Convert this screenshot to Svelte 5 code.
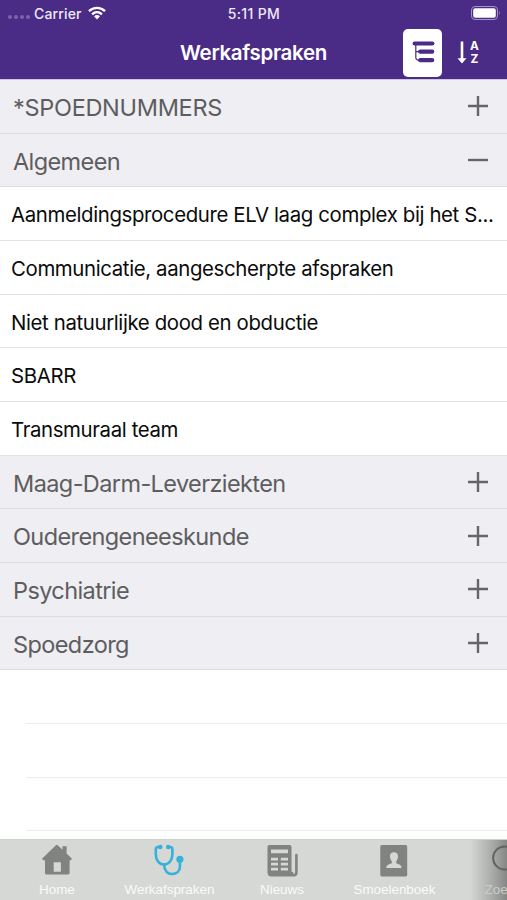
<script lang="ts">
	type Section = { title: string; items: string[] };

	const sections: Section[] = [
		{ title: '*SPOEDNUMMERS', items: [] },
		{
			title: 'Algemeen',
			items: [
				'Aanmeldingsprocedure ELV laag complex bij het S...',
				'Communicatie, aangescherpte afspraken',
				'Niet natuurlijke dood en obductie',
				'SBARR',
				'Transmuraal team'
			]
		},
		{ title: 'Maag-Darm-Leverziekten', items: [] },
		{ title: 'Ouderengeneeskunde', items: [] },
		{ title: 'Psychiatrie', items: [] },
		{ title: 'Spoedzorg', items: [] }
	];

	const tabs = [
		{ id: 'home', label: 'Home' },
		{ id: 'agreements', label: 'Werkafspraken' },
		{ id: 'news', label: 'Nieuws' },
		{ id: 'faces', label: 'Smoelenboek' },
		{ id: 'search', label: 'Zoeken' }
	];

	let open = $state('Algemeen');
	let active = $state('agreements');

	function toggle(title: string) {
		open = open === title ? '' : title;
	}
</script>

<div class="screen">
	<header>
		<div class="status">
			<div class="carrier">
				<span class="dots"><i></i><i></i><i></i><i></i></span>
				<span>Carrier</span>
				<svg class="wifi" viewBox="0 0 20 16" width="20" height="16">
					<path d="M2 6.2C6.5 1.7 13.5 1.7 18 6.2" />
					<path d="M5.1 9.3C8 6.5 12 6.5 14.9 9.3" />
					<path class="solid" d="M7 11.3Q10 8.7 13 11.3L10 14.4Z" />
				</svg>
			</div>
			<span class="time">5:11 PM</span>
			<svg class="battery" viewBox="0 0 32 16" width="32" height="16">
				<rect x="1.5" y="1.5" width="26" height="13" rx="3.5" fill="none" stroke="#a493c6" />
				<rect x="3.2" y="3.2" width="22.6" height="9.6" rx="2" fill="#fff" />
				<path d="M29.3 6Q31 8 29.3 10Z" fill="#a493c6" />
			</svg>
		</div>

		<div class="navbar">
			<h1>Werkafspraken</h1>
			<div class="actions">
				<button class="tree" aria-label="Categorieën">
					<svg viewBox="0 0 24 24" width="24" height="24">
						<path class="branch" d="M4.8 3V16.5Q4.8 19.3 9 19.3M4.8 10.7H9" />
						<path class="bar" d="M3.6 2.5H21.4M9.2 10.7H21.2M9.2 19.2H21.2" />
					</svg>
				</button>
				<button class="sort" aria-label="Alfabetisch">
					<svg viewBox="0 0 24 26" width="24" height="26">
						<path d="M3.7 1.5H6.3V18.3H9.5L5 23.5L.5 18.3H3.7Z" fill="#fff" />
						<text x="17.5" y="10.2">A</text>
						<text x="17.5" y="23.4">Z</text>
					</svg>
				</button>
			</div>
		</div>
	</header>

	<main>
		{#each sections as section}
			<button
				class="section"
				class:caps={section.title === section.title.toUpperCase()}
				onclick={() => toggle(section.title)}
			>
				<span>{section.title}</span>
				<svg viewBox="0 0 22 22" width="22" height="22">
					<path d={open === section.title ? 'M1 11H21' : 'M1 11H21M11 1V21'} />
				</svg>
			</button>
			{#if open === section.title}
				{#each section.items as item}
					<div class="item"><span>{item}</span></div>
				{/each}
			{/if}
		{/each}
		{#each [1, 2, 3] as _}
			<div class="empty"></div>
		{/each}
	</main>

	<nav>
		{#each tabs as tab}
			<button class="tab" class:active={active === tab.id} onclick={() => (active = tab.id)}>
				<svg viewBox="0 0 34 36" width="34" height="36">
					{#if tab.id === 'home'}
						<path d="M17 2.7L22.5 7.8V4.2H26.6V11.6L32 16.7L30.7 18.3H29.6V31Q29.6 32.5 28.1 32.5H6.6Q5 32.5 5 31V18.3H3.3L2 16.7L15.6 3.4Q17 2 18.4 3.4ZM13.7 20.2V29.8H20.9V20.2Z" fill-rule="evenodd" />
					{:else if tab.id === 'agreements'}
						<g class="stroke">
							<path d="M8 5H6Q3.8 5 3.8 7.5V12C3.8 18 7 22.5 12 22.5S20.4 18 20.4 12V7.5Q20.4 5 18.3 5H16.5" />
							<path d="M12 22.5C12.5 28.5 15.5 32 20 32S27.9 29.3 27.9 25V17" />
						</g>
						<circle cx="8.3" cy="5" r="2.2" />
						<circle cx="16.2" cy="5" r="2.2" />
						<circle cx="27.9" cy="17.3" r="3.6" />
					{:else if tab.id === 'news'}
						<path d="M4.5 3H24.5Q26.5 3 26.5 5V30Q26.5 34.6 29 34.6H6.5Q2.5 34.6 2.5 30.5V5Q2.5 3 4.5 3ZM6 7.5V11.2H23V7.5ZM6 15.8V18.4H13V15.8ZM15.8 15.8V18.4H23V15.8ZM6 20.8V23.4H13V20.8ZM15.8 20.8V23.4H23V20.8ZM6 25.8V28.4H13V25.8ZM15.8 25.8V28.4H23V25.8Z" fill-rule="evenodd" />
						<path class="stroke" d="M27 31Q27.5 33.2 29 33.2Q31.4 33.2 31.4 30V13" />
					{:else if tab.id === 'faces'}
						<path d="M4.9 3H28.6Q30.2 3 30.2 4.7V32.8Q30.2 34.4 28.6 34.4H4.9Q3.3 34.4 3.3 32.8V4.7Q3.3 3 4.9 3Z" />
						<path class="person" d="M17 10.2C20 10.2 21.2 12.2 21 15C20.8 17 20 18.5 19.2 19.4V21.2L22.8 22.8Q24.6 23.6 24.6 26H9.2Q9.2 23.6 11 22.8L14.8 21.2V19.4C14 18.5 13.2 17 13 15C12.8 12.2 14 10.2 17 10.2Z" />
					{:else}
						<circle class="lens" cx="14.6" cy="16" r="11.5" />
						<path class="lens" d="M23 24L31 32" />
					{/if}
				</svg>
				<span>{tab.label}</span>
			</button>
		{/each}
	</nav>
</div>

<style>
	:global(body) {
		margin: 0;
		overflow: hidden;
	}

	.screen {
		display: flex;
		flex-direction: column;
		width: 507px;
		height: 900px;
		overflow: hidden;
		background: #fff;
		font-family: Inter, 'Liberation Sans', sans-serif;
	}

	button {
		margin: 0;
		padding: 0;
		border: 0;
		background: none;
		font-family: inherit;
		flex-shrink: 0;
	}

	svg {
		display: block;
		flex-shrink: 0;
	}

	header {
		height: 79px;
		flex-shrink: 0;
		border-bottom: 1px solid #cfc5e1;
		background: #4a2b86;
		color: #fff;
	}

	.status {
		display: grid;
		grid-template-columns: 1fr auto 1fr;
		align-items: center;
		height: 26px;
		padding: 0 5px 0 8px;
		font-size: 14px;
		font-weight: 500;
		color: #eee9f6;
	}

	.carrier {
		display: flex;
		align-items: center;
		letter-spacing: 0.15px;
	}

	.time {
		margin-right: 2px;
		letter-spacing: 0.35px;
	}

	.dots {
		display: flex;
		gap: 2px;
		width: 26px;
		padding-top: 7px;
	}

	.dots i {
		width: 4px;
		height: 4px;
		border-radius: 50%;
		background: #7d65ab;
	}

	.wifi {
		margin-left: 5px;
		fill: none;
		stroke: #fff;
		stroke-width: 2.4;
	}

	.wifi .solid {
		fill: #fff;
		stroke: none;
	}

	.battery {
		justify-self: end;
	}

	.navbar {
		display: grid;
		grid-template-columns: 1fr auto 1fr;
		align-items: center;
		height: 53px;
	}

	h1 {
		grid-column: 2;
		margin: 0;
		font-size: 20.5px;
		font-weight: 600;
		letter-spacing: -0.32px;
	}

	.actions {
		display: flex;
		justify-content: flex-end;
		align-items: center;
		gap: 15px;
		padding-right: 26px;
	}

	.tree {
		display: flex;
		align-items: center;
		justify-content: center;
		width: 39px;
		height: 48px;
		border-radius: 5px;
		background: #fff;
	}

	.branch {
		fill: none;
		stroke: #4a2b86;
		stroke-width: 1.2;
	}

	.bar {
		stroke: #4a2b86;
		stroke-width: 4.2;
		stroke-linecap: round;
	}

	.sort text {
		fill: #fff;
		font-size: 11.8px;
		font-weight: 700;
		text-anchor: middle;
	}

	main {
		flex: 1;
		min-height: 0;
		overflow: hidden;
		display: flex;
		flex-direction: column;
	}

	.section,
	.item,
	.empty {
		box-sizing: border-box;
		height: 53.68px;
		flex-shrink: 0;
		border-bottom: 1px solid #e2e2e4;
	}

	.section {
		display: flex;
		align-items: center;
		justify-content: space-between;
		padding: 0 18px 0 13px;
		background: #efeef3;
		border-bottom-color: #dddde1;
		color: #5d5d60;
		font-size: 23.5px;
		letter-spacing: -0.6px;
	}

	.section span {
		padding-top: 2px;
	}

	.section.caps {
		letter-spacing: -0.3px;
	}

	.section path {
		stroke: #666668;
		stroke-width: 2.4;
	}

	.item {
		display: flex;
		align-items: center;
		padding: 2px 11px 0;
		font-size: 20.4px;
		letter-spacing: -0.37px;
		color: #0b0b0b;
	}

	.item span {
		overflow: hidden;
		text-overflow: ellipsis;
		white-space: nowrap;
	}

	.empty {
		margin-left: 26px;
		border-bottom-color: #ececec;
	}

	nav {
		display: flex;
		height: 60px;
		flex-shrink: 0;
		padding-left: 0.7px;
		border-top: 1px solid #cfd1ce;
		background: linear-gradient(90deg, #d5d8d5 0 470px, #a5a7a4 494px, #858784 507px);
	}

	.tab {
		display: flex;
		flex-direction: column;
		align-items: center;
		width: 112.5px;
		padding-top: 2px;
		color: #fafbfa;
		font-family: 'Liberation Sans', sans-serif;
		font-size: 13.4px;
		fill: #808380;
	}

	.tab span {
		margin-top: 4px;
		line-height: 15px;
	}

	.tab.active {
		fill: #36b1da;
	}

	.stroke {
		fill: none;
		stroke: #808380;
		stroke-width: 2.6;
		stroke-linecap: round;
	}

	.active .stroke {
		stroke: #36b1da;
	}

	.person {
		fill: #d5d8d5;
	}

	.lens {
		fill: none;
		stroke: #626462;
		stroke-width: 2;
	}

	.tab:last-child {
		color: #c9cbc9;
	}
</style>
